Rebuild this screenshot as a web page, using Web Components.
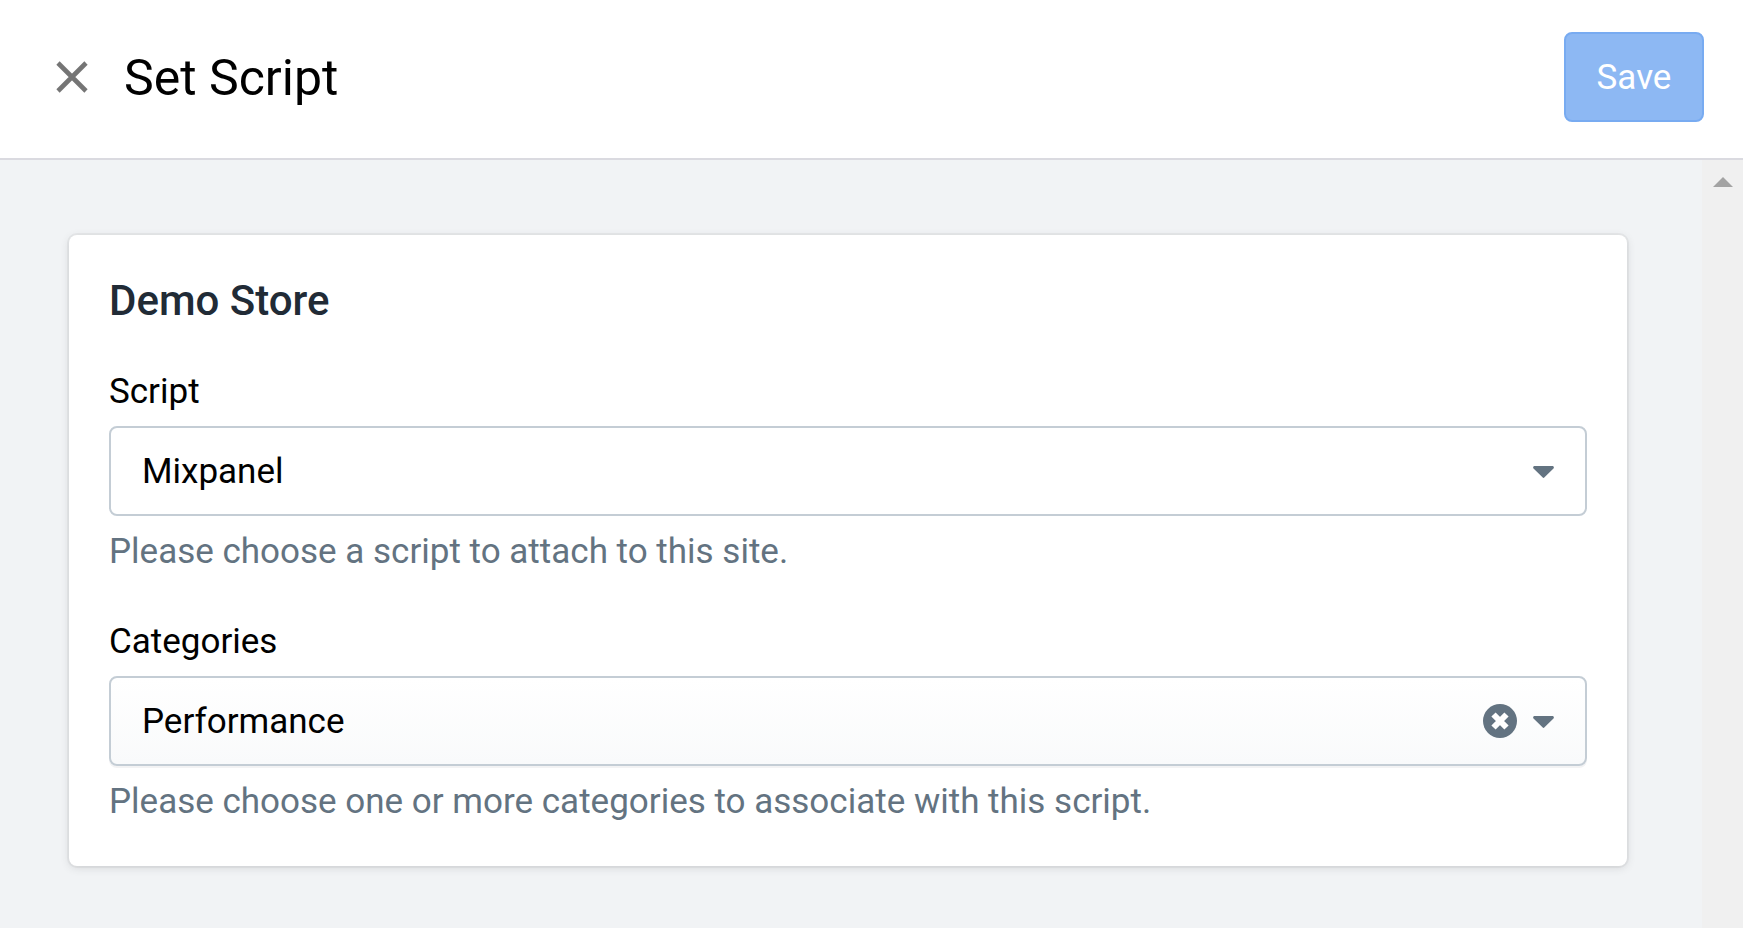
<!DOCTYPE html>
<html lang="en">
<head>
<meta charset="utf-8">
<title>Set Script</title>
<style>
  html, body { height: 100%; }
  body { margin: 0; font-family: Roboto, sans-serif; font-size: 35px; line-height: 52px; color: #000; background: #f1f3f5; }
</style>
</head>
<body>
<script-dialog></script-dialog>

<template id="t-dialog">
  <style>
    :host { display: flex; flex-direction: column; min-height: 100%; }
    .body { flex: 1; display: flex; }
    main { flex: 1; min-width: 0; padding: 75px 75px 60px 69px; }
  </style>
  <dialog-header>Set Script</dialog-header>
  <div class="body">
    <main>
      <settings-card heading="Demo Store">
        <select-field label="Script" value="Mixpanel" help="Please choose a script to attach to this site."></select-field>
        <select-field label="Categories" value="Performance" help="Please choose one or more categories to associate with this script." clearable></select-field>
      </settings-card>
    </main>
    <scroll-track></scroll-track>
  </div>
</template>

<template id="t-header">
  <style>
    :host { display: block; background: #fff; border-bottom: 2px solid #dadae0; }
    header { display: flex; align-items: center; padding: 32px 39px 36px 56px; }
    h1 { flex: 1; margin: 0; padding: 2px 0 0 36px; font-size: 50px; font-weight: 400; line-height: 60px; }
    button { font: inherit; cursor: pointer; box-sizing: border-box; }
    .close { display: flex; padding: 0; border: 0; background: none; color: #757575; }
    .save { min-width: 140px; height: 90px; padding: 2px 30px 0; border: 2px solid #78abf1; border-radius: 8px; background: #8db8f3; color: #fff; }
  </style>
  <header>
    <button class="close" aria-label="Close">
      <svg width="32" height="32" viewBox="0 0 32 32" fill="none" stroke="currentColor" stroke-width="4.6"><path d="M2 2 30 30M30 2 2 30"/></svg>
    </button>
    <h1><slot></slot></h1>
    <button class="save">Save</button>
  </header>
</template>

<template id="t-card">
  <style>
    :host { display: block; padding: 40px 40px 38px; background: #fff; border-radius: 8px;
      box-shadow: 0 0 0 2px rgba(63,63,68,.05), 0 2px 8px rgba(63,63,68,.15); }
    h2 { margin: 0 0 40px; font-size: 42px; font-weight: 500; line-height: 51px; color: #212b36; }
    .fields { display: flex; flex-direction: column; gap: 38px; }
  </style>
  <h2></h2>
  <div class="fields"><slot></slot></div>
</template>

<template id="t-field">
  <style>
    :host { display: flex; flex-direction: column; }
    label { align-self: flex-start; }
    .control { display: grid; grid-template-columns: 1fr auto; align-items: center; margin: 8px 0 10px; }
    select { grid-area: 1 / 1 / 2 / 3; width: 100%; height: 90px; box-sizing: border-box; margin: 0; padding: 2px 120px 0 31px;
      appearance: none; border: 2px solid #c4cdd5; border-radius: 8px; background: #fff; font: inherit; color: inherit; }
    :host([clearable]) select { background: linear-gradient(#fff, #f9fafb); box-shadow: 0 2px 0 rgba(22,29,37,.05); }
    .icons { grid-area: 1 / 2; display: flex; align-items: center; gap: 16px; padding-right: 33px; color: #637381; pointer-events: none; z-index: 1; }
    button { display: flex; padding: 0; border: 0; background: none; color: inherit; cursor: pointer; pointer-events: auto; }
    :host(:not([clearable])) button { display: none; }
    .caret { margin-top: 2px; }
    p { margin: 0; color: #637381; }
  </style>
  <label for="control"></label>
  <div class="control">
    <select id="control" aria-describedby="help"><option></option></select>
    <div class="icons">
      <button aria-label="Clear">
        <svg width="34" height="34" viewBox="0 0 34 34"><circle cx="17" cy="17" r="17" fill="currentColor"/><path d="M10.500 10.500 23.500 23.500M23.500 10.500 10.500 23.500" stroke="#fff" stroke-width="6"/></svg>
      </button>
      <svg class="caret" width="21" height="12" viewBox="0 0 21 12" fill="currentColor"><path d="M1 0H20Q21.500 1 20.500 2.500L11.500 11.300Q10.500 12.500 9.500 11.300L.5 2.500Q-.5 1 1 0Z"/></svg>
    </div>
  </div>
  <p id="help"></p>
</template>

<template id="t-track">
  <style>
    :host { display: flex; flex: none; justify-content: center; align-items: flex-start; width: 41px; background: #f0f0f0; }
    svg { margin-top: 17px; }
  </style>
  <svg width="20" height="10" viewBox="0 0 20 10" fill="#a3a3a3" aria-hidden="true"><path d="M0 10 10 0 20 10Z"/></svg>
</template>

<script>
  class TemplateElement extends HTMLElement {
    constructor() {
      super();
      const template = document.getElementById(this.constructor.template);
      this.attachShadow({ mode: 'open' }).append(template.content.cloneNode(true));
    }
    fill(selector, attribute) {
      this.shadowRoot.querySelector(selector).textContent = this.getAttribute(attribute) || '';
    }
  }
  class DialogHeader extends TemplateElement { static template = 't-header'; }
  class ScrollTrack extends TemplateElement { static template = 't-track'; }
  class SettingsCard extends TemplateElement {
    static template = 't-card';
    connectedCallback() { this.fill('h2', 'heading'); }
  }
  class SelectField extends TemplateElement {
    static template = 't-field';
    connectedCallback() {
      this.fill('label', 'label');
      this.fill('option', 'value');
      this.fill('p', 'help');
      this.shadowRoot.querySelector('button').addEventListener('click', () => {
        this.shadowRoot.querySelector('select').selectedIndex = -1;
      });
    }
  }
  class ScriptDialog extends TemplateElement { static template = 't-dialog'; }
  customElements.define('dialog-header', DialogHeader);
  customElements.define('scroll-track', ScrollTrack);
  customElements.define('settings-card', SettingsCard);
  customElements.define('select-field', SelectField);
  customElements.define('script-dialog', ScriptDialog);
</script>
</body>
</html>
